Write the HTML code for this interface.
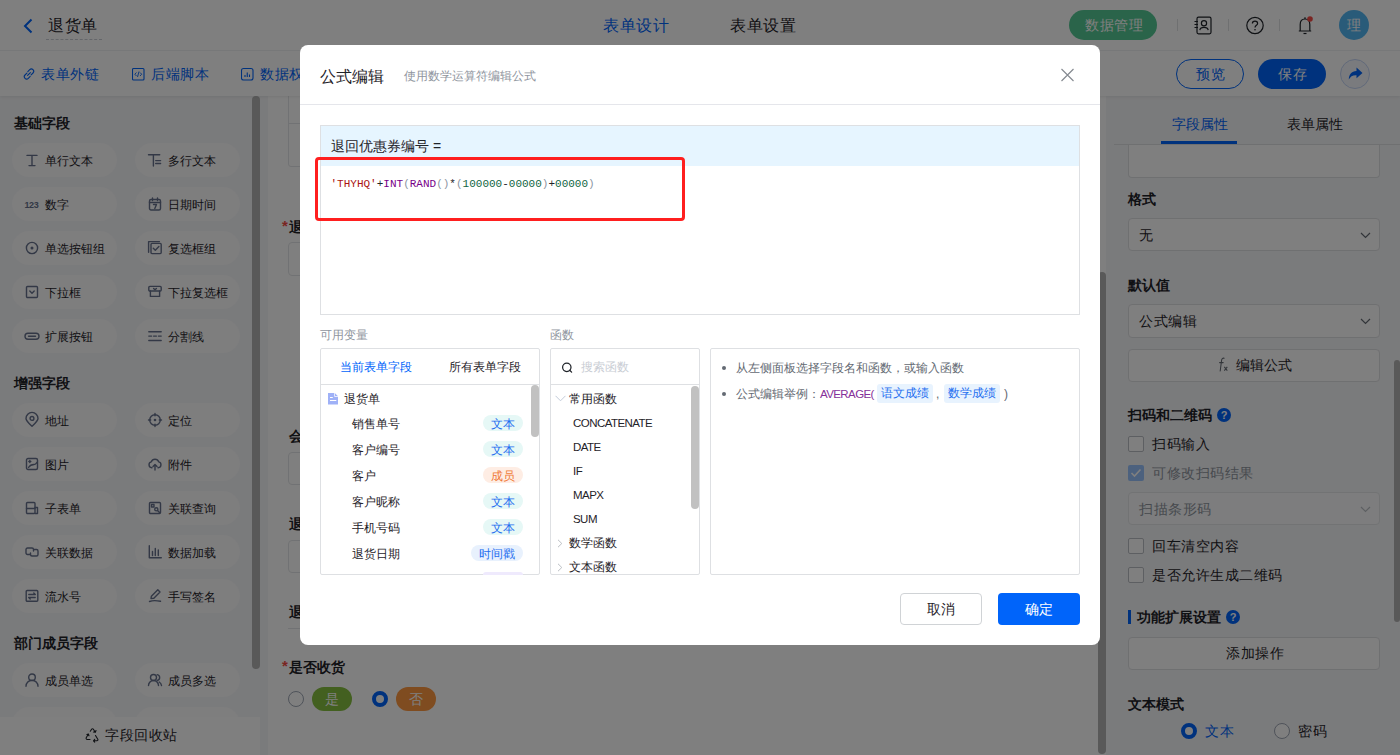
<!DOCTYPE html>
<html><head><meta charset="utf-8">
<style>
*{box-sizing:border-box;}
html,body{margin:0;padding:0;}
body{width:1400px;height:755px;overflow:hidden;position:relative;font-family:"Liberation Sans",sans-serif;color:#1f2329;background:#fff;}
.a{position:absolute;}
.t{position:absolute;white-space:nowrap;line-height:1;}
/* header */
#hdr{left:0;top:0;width:1400px;height:51px;z-index:3;background:#fff;border-bottom:1px solid #eff0f2;}
#bar2{left:0;top:50px;width:1400px;height:46px;background:#fff;z-index:2;box-shadow:0 1px 3px rgba(0,0,0,.08);}
#ov{z-index:5;}#modal{z-index:6;}
#side{left:0;top:96px;width:268px;height:659px;background:#f5f6f8;}
#canvas{left:268px;top:96px;width:838px;height:659px;background:#fff;overflow:hidden;}
#rp{left:1106px;top:96px;width:294px;height:659px;background:#f5f6f8;overflow:hidden;}
.pill{position:absolute;width:105px;height:34px;border-radius:17px;background:#fcfcfd;font-size:12px;}
.pill .lb{position:absolute;left:33px;top:11px;line-height:14px;white-space:nowrap;}
.pill svg{position:absolute;left:13px;top:10px;}
.sh{position:absolute;left:14px;font-size:14px;font-weight:bold;line-height:16px;}
#ov{left:0;top:0;width:1400px;height:755px;background:rgba(0,0,0,.5);}
#modal{left:300px;top:45px;width:800px;height:600px;background:#fff;border-radius:8px;}
.t[style*="font-size:14px"]:not([style*="bold"]),.t[style*="font-size:16px"]{letter-spacing:0.5px;}
</style></head>
<body>

<div id="hdr" class="a">
 <svg class="a" style="left:22px;top:18px" width="12" height="16" viewBox="0 0 12 16"><path d="M9.5 1.5 L3 8 L9.5 14.5" fill="none" stroke="#0064fa" stroke-width="2"/></svg>
 <div class="t" style="left:48px;top:18px;font-size:16px;color:#1f2329;">退货单</div>
 <div class="a" style="left:46px;top:39px;width:56px;border-top:1px dashed #c9cdd4;"></div>
 <div class="t" style="left:603px;top:18px;font-size:16px;color:#0064fa;">表单设计</div>
 <div class="t" style="left:730px;top:18px;font-size:16px;color:#1f2329;">表单设置</div>
 <div class="a" style="left:1069px;top:10px;width:88px;height:30px;border-radius:15px;background:#54c894;"></div>
 <div class="t" style="left:1085px;top:18px;font-size:14px;color:#fff;">数据管理</div>
 <div class="a" style="left:1177px;top:19px;width:1px;height:12px;background:#dee0e3;"></div>
 <div class="a" style="left:1228px;top:19px;width:1px;height:12px;background:#dee0e3;"></div>
 <div class="a" style="left:1279px;top:19px;width:1px;height:12px;background:#dee0e3;"></div>
 <svg class="a" style="left:1193px;top:16px" width="20" height="20" viewBox="0 0 20 20"><rect x="4" y="1.2" width="14" height="16.6" rx="1.5" fill="none" stroke="#1f2329" stroke-width="1.2"/><circle cx="11" cy="7.3" r="2.6" fill="none" stroke="#1f2329" stroke-width="1.2"/><path d="M6.8 14.2C7.5 10.5 14.5 10.5 15.2 14.2" fill="none" stroke="#1f2329" stroke-width="1.2"/><path d="M1.5 5.5h3.5M1.5 8.5h3.5M1.5 11.5h3.5" stroke="#1f2329" stroke-width="1.1"/></svg>
 <svg class="a" style="left:1245px;top:16px" width="20" height="20" viewBox="0 0 20 20"><circle cx="10" cy="9.5" r="8.2" fill="none" stroke="#1f2329" stroke-width="1.2"/><path d="M7.4 7.4C7.4 4.4 12.6 4.4 12.6 7.4C12.6 9.4 10 9.3 10 11.6" fill="none" stroke="#1f2329" stroke-width="1.2"/><circle cx="10" cy="13.8" r="0.8" fill="#1f2329"/></svg>
 <svg class="a" style="left:1295px;top:15px" width="20" height="22" viewBox="0 0 20 22"><path d="M5.2 15.8V9.5C5.2 6.2 7.2 4 10 4C12.8 4 14.8 6.2 14.8 9.5V15.8M3.8 16H16.2" fill="none" stroke="#1f2329" stroke-width="1.2" stroke-linejoin="round"/><path d="M8.5 18.5H11.5" stroke="#1f2329" stroke-width="1.2"/><path d="M10 2.2V4" stroke="#1f2329" stroke-width="1.2"/><circle cx="15" cy="4" r="2.8" fill="#f54a45"/></svg>
 <div class="a" style="left:1339px;top:10px;width:30px;height:30px;border-radius:50%;background:#52b6f2;"></div>
 <div class="t" style="left:1347px;top:18px;font-size:14px;color:#fff;">理</div>
</div>
<div id="bar2" class="a">
 <svg class="a" style="left:22px;top:17px" width="14" height="14" viewBox="0 0 14 14"><path d="M5.6 8.4L8.4 5.6M4.9 6.1L3 8A2.3 2.3 0 0 0 6.3 11.3L8.2 9.4M9.1 7.9L11 6A2.3 2.3 0 0 0 7.7 2.7L5.8 4.6" fill="none" stroke="#0064fa" stroke-width="1.1" stroke-linecap="round"/></svg>
 <div class="t" style="left:41px;top:17px;font-size:14px;color:#0064fa;">表单外链</div>
 <svg class="a" style="left:132px;top:17px" width="13" height="14" viewBox="0 0 13 14"><rect x="0.5" y="1.5" width="11.5" height="11.5" rx="1" fill="none" stroke="#0064fa" stroke-width="1.1"/><path d="M4.5 5.5L2.8 7.2L4.5 9M8 5.5L9.7 7.2L8 9M7 4.5L5.5 10" fill="none" stroke="#0064fa" stroke-width="0.9"/></svg>
 <div class="t" style="left:151px;top:17px;font-size:14px;color:#0064fa;">后端脚本</div>
 <svg class="a" style="left:241px;top:17px" width="13" height="14" viewBox="0 0 13 14"><rect x="0.5" y="1.5" width="11.5" height="11.5" rx="2" fill="none" stroke="#0064fa" stroke-width="1.1"/><path d="M4 10V8M6.25 10V5.5M8.5 10V7.5" stroke="#0064fa" stroke-width="1.1"/></svg>
 <div class="t" style="left:260px;top:17px;font-size:14px;color:#0064fa;">数据权限</div>
 <div class="a" style="left:1176px;top:9px;width:68px;height:30px;border-radius:15px;border:1px solid #0064fa;"></div>
 <div class="t" style="left:1196px;top:17px;font-size:14px;color:#0064fa;">预览</div>
 <div class="a" style="left:1258px;top:9px;width:68px;height:30px;border-radius:15px;background:#0064fa;"></div>
 <div class="t" style="left:1278px;top:17px;font-size:14px;color:#fff;">保存</div>
 <div class="a" style="left:1340px;top:9px;width:30px;height:30px;border-radius:50%;border:1px solid #c4d4f4;background:#f4f7fd;"></div>
 <svg class="a" style="left:1346px;top:16px" width="18" height="16" viewBox="0 0 18 16"><path d="M10.5 1.5 L16.5 7 L10.5 12.3 V9.2 C6.5 9 4.5 10.5 2.8 13.5 C2.8 8.5 5.5 5.3 10.5 4.9 Z" fill="#0064fa"/></svg>
</div>
<div id="side" class="a">
 <div class="sh" style="top:19px">基础字段</div>
 <div class="pill" style="left:12px;top:47px"><svg width="14" height="14" viewBox="0 0 14 14" style="overflow:visible"><path d="M2 2.4h10M7 2.4v10.2M4 12.6h6" stroke="#66718c" fill="none" stroke-width="1.4" stroke-linecap="round" stroke-linejoin="round" stroke-linecap="butt"/></svg><span class="lb">单行文本</span></div>
 <div class="pill" style="left:135px;top:47px"><svg width="14" height="14" viewBox="0 0 14 14" style="overflow:visible"><path d="M0.5 1.8h11.2M5.4 1.8v11.2M7.7 7.6h4.9M7.7 10.5h4.9" stroke="#66718c" fill="none" stroke-width="1.4" stroke-linecap="round" stroke-linejoin="round" stroke-linecap="butt"/></svg><span class="lb">多行文本</span></div>
 <div class="pill" style="left:12px;top:91px"><svg width="14" height="14" viewBox="0 0 14 14" style="overflow:visible"><text x="-0.5" y="10.8" font-size="9" font-weight="bold" fill="#66718c" font-family="Liberation Sans" letter-spacing="-0.4">123</text></svg><span class="lb">数字</span></div>
 <div class="pill" style="left:135px;top:91px"><svg width="14" height="14" viewBox="0 0 14 14" style="overflow:visible"><rect x="1.5" y="2.5" width="11" height="10.5" rx="1.5" stroke="#66718c" fill="none" stroke-width="1.4" stroke-linecap="round" stroke-linejoin="round"/><path d="M1.5 5.5h11M4.5 1v2.5M9.5 1v2.5" stroke="#66718c" fill="none" stroke-width="1.4" stroke-linecap="round" stroke-linejoin="round"/><path d="M5.5 7.5h3L6.8 11.5" stroke="#66718c" fill="none" stroke-width="1.4" stroke-linecap="round" stroke-linejoin="round" stroke-width="1.1"/></svg><span class="lb">日期时间</span></div>
 <div class="pill" style="left:12px;top:135px"><svg width="14" height="14" viewBox="0 0 14 14" style="overflow:visible"><circle cx="7" cy="7" r="5.6" stroke="#66718c" fill="none" stroke-width="1.4" stroke-linecap="round" stroke-linejoin="round"/><circle cx="7" cy="7" r="1.5" fill="#66718c"/></svg><span class="lb">单选按钮组</span></div>
 <div class="pill" style="left:135px;top:135px"><svg width="14" height="14" viewBox="0 0 14 14" style="overflow:visible"><path d="M0.6 11.3V0.6H11.4" stroke="#66718c" fill="none" stroke-width="1.4" stroke-linecap="round" stroke-linejoin="round"/><rect x="3" y="2.4" width="10.2" height="10.2" rx="1" stroke="#66718c" fill="none" stroke-width="1.4" stroke-linecap="round" stroke-linejoin="round"/><path d="M5.3 7.3l2 2 3.6-3.8" stroke="#66718c" fill="none" stroke-width="1.4" stroke-linecap="round" stroke-linejoin="round"/></svg><span class="lb">复选框组</span></div>
 <div class="pill" style="left:12px;top:179px"><svg width="14" height="14" viewBox="0 0 14 14" style="overflow:visible"><rect x="1.5" y="1.5" width="11" height="11" rx="1" stroke="#66718c" fill="none" stroke-width="1.4" stroke-linecap="round" stroke-linejoin="round"/><path d="M4.8 6l2.2 2.2 2.2-2.2" stroke="#66718c" fill="none" stroke-width="1.4" stroke-linecap="round" stroke-linejoin="round"/></svg><span class="lb">下拉框</span></div>
 <div class="pill" style="left:135px;top:179px"><svg width="14" height="14" viewBox="0 0 14 14" style="overflow:visible"><rect x="0.8" y="1.4" width="12.4" height="4.6" rx="1" stroke="#66718c" fill="none" stroke-width="1.4" stroke-linecap="round" stroke-linejoin="round"/><path d="M2.4 6v5.4h9.2V6" stroke="#66718c" fill="none" stroke-width="1.4" stroke-linecap="round" stroke-linejoin="round"/><path d="M5.6 3.4l1.4 1.4 1.4-1.4" stroke="#66718c" fill="none" stroke-width="1.4" stroke-linecap="round" stroke-linejoin="round" stroke-width="1.1"/></svg><span class="lb">下拉复选框</span></div>
 <div class="pill" style="left:12px;top:223px"><svg width="14" height="14" viewBox="0 0 14 14" style="overflow:visible"><rect x="0" y="4.2" width="14" height="6" rx="3" stroke="#66718c" fill="none" stroke-width="1.4" stroke-linecap="round" stroke-linejoin="round"/><path d="M3.5 7.2h7" stroke="#66718c" fill="none" stroke-width="1.4" stroke-linecap="round" stroke-linejoin="round"/></svg><span class="lb">扩展按钮</span></div>
 <div class="pill" style="left:135px;top:223px"><svg width="14" height="14" viewBox="0 0 14 14" style="overflow:visible"><path d="M0.8 2.7h12.4M0.8 7.1h2.8M5.6 7.1h2.8M10.4 7.1h2.8M0.8 11.5h12.4" stroke="#66718c" fill="none" stroke-width="1.4" stroke-linecap="round" stroke-linejoin="round" stroke-linecap="butt"/></svg><span class="lb">分割线</span></div>
 <div class="sh" style="top:279px">增强字段</div>
 <div class="pill" style="left:12px;top:307px"><svg width="14" height="14" viewBox="0 0 14 14" style="overflow:visible"><path d="M7 13.3C3.4 9.8 1 7.6 1 5.4A6 6 0 0 1 13 5.4C13 7.6 10.6 9.8 7 13.3Z" stroke="#66718c" fill="none" stroke-width="1.4" stroke-linecap="round" stroke-linejoin="round"/><circle cx="7" cy="5.4" r="1.9" stroke="#66718c" fill="none" stroke-width="1.4" stroke-linecap="round" stroke-linejoin="round"/></svg><span class="lb">地址</span></div>
 <div class="pill" style="left:135px;top:307px"><svg width="14" height="14" viewBox="0 0 14 14" style="overflow:visible"><circle cx="7" cy="7" r="5.3" stroke="#66718c" fill="none" stroke-width="1.4" stroke-linecap="round" stroke-linejoin="round"/><circle cx="7" cy="7" r="1.3" fill="#66718c"/><path d="M7 0.5v2.2M7 11.3v2.2M0.5 7h2.2M11.3 7h2.2" stroke="#66718c" fill="none" stroke-width="1.4" stroke-linecap="round" stroke-linejoin="round"/></svg><span class="lb">定位</span></div>
 <div class="pill" style="left:12px;top:351px"><svg width="14" height="14" viewBox="0 0 14 14" style="overflow:visible"><rect x="1.5" y="1.5" width="11" height="11" rx="1.5" stroke="#66718c" fill="none" stroke-width="1.4" stroke-linecap="round" stroke-linejoin="round"/><path d="M3.5 10.5C5 8 7 7.5 9 7.5S11 6 12 5.5M3.8 4.5h2M4.8 3.5v2" stroke="#66718c" fill="none" stroke-width="1.4" stroke-linecap="round" stroke-linejoin="round" stroke-width="1.1"/></svg><span class="lb">图片</span></div>
 <div class="pill" style="left:135px;top:351px"><svg width="14" height="14" viewBox="0 0 14 14" style="overflow:visible"><path d="M4 10.8H3.8A3 3 0 0 1 3.3 4.9A3.9 3.9 0 0 1 10.7 4.9A3 3 0 0 1 10.2 10.8H10" stroke="#66718c" fill="none" stroke-width="1.4" stroke-linecap="round" stroke-linejoin="round"/><path d="M7 13V7.8M5 9.6l2-2 2 2" stroke="#66718c" fill="none" stroke-width="1.4" stroke-linecap="round" stroke-linejoin="round"/></svg><span class="lb">附件</span></div>
 <div class="pill" style="left:12px;top:395px"><svg width="14" height="14" viewBox="0 0 14 14" style="overflow:visible"><rect x="1.5" y="1.5" width="8.5" height="11" rx="1" stroke="#66718c" fill="none" stroke-width="1.4" stroke-linecap="round" stroke-linejoin="round"/><path d="M1.5 7.5h8.5M10 6.5h2.5v6h-2.5" stroke="#66718c" fill="none" stroke-width="1.4" stroke-linecap="round" stroke-linejoin="round"/></svg><span class="lb">子表单</span></div>
 <div class="pill" style="left:135px;top:395px"><svg width="14" height="14" viewBox="0 0 14 14" style="overflow:visible"><rect x="1.5" y="1.5" width="11" height="11" rx="1" stroke="#66718c" fill="none" stroke-width="1.4" stroke-linecap="round" stroke-linejoin="round"/><rect x="3.5" y="3.5" width="2.5" height="2.5" stroke="#66718c" fill="none" stroke-width="1.4" stroke-linecap="round" stroke-linejoin="round" stroke-width="1.1"/><circle cx="8.3" cy="8.3" r="1.6" stroke="#66718c" fill="none" stroke-width="1.4" stroke-linecap="round" stroke-linejoin="round" stroke-width="1.1"/><path d="M9.5 9.5l2 2" stroke="#66718c" fill="none" stroke-width="1.4" stroke-linecap="round" stroke-linejoin="round" stroke-width="1.1"/></svg><span class="lb">关联查询</span></div>
 <div class="pill" style="left:12px;top:439px"><svg width="14" height="14" viewBox="0 0 14 14" style="overflow:visible"><path d="M5.5 9.5H2.5A1.5 1.5 0 0 1 1 8V4.5A1.5 1.5 0 0 1 2.5 3H7A1.5 1.5 0 0 1 8.5 4.5V6M8.5 4.5H11.5A1.5 1.5 0 0 1 13 6V9.5A1.5 1.5 0 0 1 11.5 11H7A1.5 1.5 0 0 1 5.5 9.5V8" stroke="#66718c" fill="none" stroke-width="1.4" stroke-linecap="round" stroke-linejoin="round"/></svg><span class="lb">关联数据</span></div>
 <div class="pill" style="left:135px;top:439px"><svg width="14" height="14" viewBox="0 0 14 14" style="overflow:visible"><path d="M1.3 0.8v12h12" stroke="#66718c" fill="none" stroke-width="1.4" stroke-linecap="round" stroke-linejoin="round"/><path d="M4.5 10.5V6.5M7.3 10.5V3.5M10.3 10.5V5" stroke="#66718c" fill="none" stroke-width="1.4" stroke-linecap="round" stroke-linejoin="round"/></svg><span class="lb">数据加载</span></div>
 <div class="pill" style="left:12px;top:483px"><svg width="14" height="14" viewBox="0 0 14 14" style="overflow:visible"><rect x="1.2" y="1.5" width="11.6" height="10.8" rx="1" stroke="#66718c" fill="none" stroke-width="1.4" stroke-linecap="round" stroke-linejoin="round"/><path d="M3.8 5.5h6.5l-1.5-1.4M10.2 8.5h-6.5l1.5 1.4" stroke="#66718c" fill="none" stroke-width="1.4" stroke-linecap="round" stroke-linejoin="round" stroke-width="1.2"/></svg><span class="lb">流水号</span></div>
 <div class="pill" style="left:135px;top:483px"><svg width="14" height="14" viewBox="0 0 14 14" style="overflow:visible"><path d="M1.5 12.5C4 11.5 8 11.3 12.5 12.3" stroke="#66718c" fill="none" stroke-width="1.4" stroke-linecap="round" stroke-linejoin="round"/><path d="M3 9.5L3.4 7.2L9.8 0.8L12 3L5.6 9.4Z" stroke="#66718c" fill="none" stroke-width="1.4" stroke-linecap="round" stroke-linejoin="round"/></svg><span class="lb">手写签名</span></div>
 <div class="sh" style="top:539px">部门成员字段</div>
 <div class="pill" style="left:12px;top:567px"><svg width="14" height="14" viewBox="0 0 14 14" style="overflow:visible"><circle cx="7" cy="4.3" r="3.3" stroke="#66718c" fill="none" stroke-width="1.4" stroke-linecap="round" stroke-linejoin="round"/><path d="M1 13.3A6 6 0 0 1 13 13.3" stroke="#66718c" fill="none" stroke-width="1.4" stroke-linecap="round" stroke-linejoin="round"/></svg><span class="lb">成员单选</span></div>
 <div class="pill" style="left:135px;top:567px"><svg width="14" height="14" viewBox="0 0 14 14" style="overflow:visible"><circle cx="5.5" cy="4.5" r="3" stroke="#66718c" fill="none" stroke-width="1.4" stroke-linecap="round" stroke-linejoin="round"/><path d="M0.5 12.5A5 5 0 0 1 10.5 12.5M9.2 1.6A3 3 0 0 1 9.2 7.5M11.2 9A5 5 0 0 1 13.5 12.5" stroke="#66718c" fill="none" stroke-width="1.4" stroke-linecap="round" stroke-linejoin="round"/></svg><span class="lb">成员多选</span></div>
 <div class="pill" style="left:12px;top:611px"><svg width="14" height="14" viewBox="0 0 14 14" style="overflow:visible"><circle cx="7" cy="4.3" r="3.3" stroke="#66718c" fill="none" stroke-width="1.4" stroke-linecap="round" stroke-linejoin="round"/><path d="M1 13.3A6 6 0 0 1 13 13.3" stroke="#66718c" fill="none" stroke-width="1.4" stroke-linecap="round" stroke-linejoin="round"/></svg><span class="lb">部门单选</span></div>
 <div class="pill" style="left:135px;top:611px"><svg width="14" height="14" viewBox="0 0 14 14" style="overflow:visible"><circle cx="5.5" cy="4.5" r="3" stroke="#66718c" fill="none" stroke-width="1.4" stroke-linecap="round" stroke-linejoin="round"/><path d="M0.5 12.5A5 5 0 0 1 10.5 12.5M9.2 1.6A3 3 0 0 1 9.2 7.5M11.2 9A5 5 0 0 1 13.5 12.5" stroke="#66718c" fill="none" stroke-width="1.4" stroke-linecap="round" stroke-linejoin="round"/></svg><span class="lb">部门多选</span></div>
 <div class="a" style="left:252px;top:0;width:8px;height:573px;border-radius:4px;background:#b3b3b3;"></div>
 <div class="a" style="left:0;top:621px;width:260px;height:38px;background:#fff;"></div>
 <svg class="a" style="left:85px;top:632px" width="15" height="15" viewBox="0 0 15 15"><path d="M5.3 3.2L6.6 1.2C7 0.6 8 0.6 8.4 1.2L10.3 4.3M11 2.5L10.3 4.3L8.4 4M3.4 6L1.2 9.8C0.9 10.4 1.3 11.5 2.2 11.5H5M1.9 6.5L3.4 6L4 7.8M10.5 7.5L12.8 11.3C13.2 12 12.7 12.8 12 12.8H8.5M9.7 11.3L8.5 12.8L9.7 14.2" fill="none" stroke="#1f2329" stroke-width="1.1" stroke-linecap="round" stroke-linejoin="round"/></svg>
 <div class="t" style="left:105px;top:632px;font-size:14px;color:#1f2329;">字段回收站</div>
</div>
<div id="canvas" class="a">
 <div class="a" style="left:20px;top:-30px;width:790px;height:101px;border:1px solid #e3e5e8;border-radius:3px;"></div>
 <div class="a" style="left:20px;top:27px;width:790px;height:1px;background:#e3e5e8;"></div>
 <div class="t" style="left:14px;top:124px;font-size:15px;line-height:16px;font-weight:bold;color:#f54a45;margin-top:-2px;">*</div>
 <div class="t" style="left:20.5px;top:123px;font-size:14px;line-height:16px;font-weight:bold;">退货单号</div>
 <div class="a" style="left:20px;top:146px;width:790px;height:34px;border:1px solid #e3e5e8;border-radius:4px;"></div>
 <div class="t" style="left:20.5px;top:332px;font-size:14px;line-height:16px;font-weight:bold;">会员编号</div>
 <div class="a" style="left:20px;top:356px;width:790px;height:33px;border:1px solid #e3e5e8;border-radius:4px;"></div>
 <div class="t" style="left:20.5px;top:420px;font-size:14px;line-height:16px;font-weight:bold;">退货原因</div>
 <div class="a" style="left:20px;top:444px;width:790px;height:33px;border:1px solid #e3e5e8;border-radius:4px;"></div>
 <div class="t" style="left:20.5px;top:508px;font-size:14px;line-height:16px;font-weight:bold;">退回优惠券编号</div>
 <div class="a" style="left:20px;top:532px;width:790px;height:1px;background:#e3e5e8;"></div>
 <div class="t" style="left:14px;top:564px;font-size:15px;line-height:16px;font-weight:bold;color:#f54a45;margin-top:-2px;">*</div>
 <div class="t" style="left:20.5px;top:563px;font-size:14px;line-height:16px;font-weight:bold;">是否收货</div>
 <div class="a" style="left:20px;top:595px;width:16px;height:16px;border-radius:50%;border:1.2px solid #9ea6b4;background:#fff;"></div>
 <div class="a" style="left:44px;top:591px;width:40px;height:24px;border-radius:12px;background:#86c040;color:#fff;font-size:14px;line-height:24px;text-align:center;">是</div>
 <div class="a" style="left:104px;top:595px;width:16px;height:16px;border-radius:50%;border:4px solid #0064fa;background:#fff;"></div>
 <div class="a" style="left:128px;top:591px;width:40px;height:24px;border-radius:12px;background:#fe9840;color:#fff;font-size:14px;line-height:24px;text-align:center;">否</div>
 <div class="a" style="left:830px;top:176px;width:8px;height:482px;border-radius:4px;background:#b3b3b3;"></div>
</div>
<div id="rp" class="a">
 <div class="t" style="left:66px;top:21px;font-size:14px;letter-spacing:0;color:#0064fa;">字段属性</div>
 <div class="t" style="left:181px;top:21px;font-size:14px;letter-spacing:0;color:#1f2329;">表单属性</div>
 <div class="a" style="left:8px;top:48px;width:286px;height:1px;background:#dee0e3;"></div>
 <div class="a" style="left:55px;top:45px;width:76px;height:3px;background:#0064fa;"></div>
 <div class="a" style="left:22px;top:49px;width:252px;height:33px;border:1px solid #dee0e3;border-top:none;border-radius:0 0 4px 4px;background:#fff;"></div>
 <div class="t" style="left:22px;top:96px;font-size:14px;font-weight:bold;">格式</div>
 <div class="a" style="left:22px;top:122px;width:252px;height:33px;border:1px solid #dee0e3;border-radius:4px;background:#fff;"></div>
 <div class="t" style="left:33px;top:132px;font-size:14px;">无</div>
 <svg class="a" style="left:254px;top:136px" width="11" height="7" viewBox="0 0 11 7"><path d="M1 1l4.5 4.5L10 1" fill="none" stroke="#646a73" stroke-width="1.2"/></svg>
 <div class="t" style="left:22px;top:182px;font-size:14px;font-weight:bold;">默认值</div>
 <div class="a" style="left:22px;top:208px;width:252px;height:34px;border:1px solid #dee0e3;border-radius:4px;background:#fff;"></div>
 <div class="t" style="left:33px;top:218px;font-size:14px;">公式编辑</div>
 <svg class="a" style="left:254px;top:222px" width="11" height="7" viewBox="0 0 11 7"><path d="M1 1l4.5 4.5L10 1" fill="none" stroke="#646a73" stroke-width="1.2"/></svg>
 <div class="a" style="left:22px;top:253px;width:252px;height:33px;border:1px solid #dee0e3;border-radius:4px;background:#fff;"></div>
 <svg class="a" style="left:111px;top:261px" width="14" height="15" viewBox="0 0 14 15"><path d="M7.2 1.2C5.6 0.8 4.8 1.8 4.6 3.2L3.2 14M2.6 5.6H6.2" fill="none" stroke="#646a73" stroke-width="1.05" stroke-linecap="round"/><path d="M7.3 9.8L10.3 13.6M10.3 9.8L7.3 13.6" fill="none" stroke="#646a73" stroke-width="1.05"/></svg>
 <div class="t" style="left:130px;top:262px;font-size:14px;letter-spacing:0;">编辑公式</div>
 <div class="t" style="left:22px;top:312px;font-size:14px;font-weight:bold;">扫码和二维码</div>
 <div class="a" style="left:111px;top:312px;width:14px;height:14px;border-radius:50%;background:#0064fa;color:#fff;font-size:11px;font-weight:bold;text-align:center;line-height:14px;">?</div>
 <div class="a" style="left:22px;top:340px;width:16px;height:16px;border:1px solid #bbbfc4;border-radius:2px;background:#fff;"></div>
 <div class="t" style="left:46px;top:341px;font-size:14px;">扫码输入</div>
 <div class="a" style="left:22px;top:369px;width:16px;height:16px;border-radius:2px;background:#99c2fd;"></div>
 <svg class="a" style="left:24px;top:372px" width="12" height="10" viewBox="0 0 12 10"><path d="M1.5 5l3 3 6-6.5" fill="none" stroke="#fff" stroke-width="1.6"/></svg>
 <div class="t" style="left:46px;top:370px;font-size:14px;color:#8f959e;">可修改扫码结果</div>
 <div class="a" style="left:22px;top:396px;width:252px;height:33px;border:1px solid #e5e6e9;border-radius:4px;background:#fafbfc;"></div>
 <div class="t" style="left:33px;top:406px;font-size:14px;color:#8f959e;">扫描条形码</div>
 <svg class="a" style="left:254px;top:410px" width="11" height="7" viewBox="0 0 11 7"><path d="M1 1l4.5 4.5L10 1" fill="none" stroke="#bbbfc4" stroke-width="1.2"/></svg>
 <div class="a" style="left:22px;top:442px;width:16px;height:16px;border:1px solid #bbbfc4;border-radius:2px;background:#fff;"></div>
 <div class="t" style="left:46px;top:443px;font-size:14px;">回车清空内容</div>
 <div class="a" style="left:22px;top:471px;width:16px;height:16px;border:1px solid #bbbfc4;border-radius:2px;background:#fff;"></div>
 <div class="t" style="left:46px;top:472px;font-size:14px;">是否允许生成二维码</div>
 <div class="a" style="left:22px;top:514px;width:3px;height:14px;background:#0064fa;"></div>
 <div class="t" style="left:31px;top:514px;font-size:14px;font-weight:bold;">功能扩展设置</div>
 <div class="a" style="left:120px;top:514px;width:14px;height:14px;border-radius:50%;background:#0064fa;color:#fff;font-size:11px;font-weight:bold;text-align:center;line-height:14px;">?</div>
 <div class="a" style="left:22px;top:541px;width:252px;height:33px;border:1px solid #dee0e3;border-radius:4px;background:#fff;"></div>
 <div class="t" style="left:120px;top:550px;font-size:14px;">添加操作</div>
 <div class="t" style="left:22px;top:601px;font-size:14px;font-weight:bold;">文本模式</div>
 <div class="a" style="left:75px;top:627px;width:16px;height:16px;border-radius:50%;border:4px solid #0064fa;background:#fff;"></div>
 <div class="t" style="left:99px;top:628px;font-size:14px;color:#0064fa;">文本</div>
 <div class="a" style="left:168px;top:627px;width:16px;height:16px;border-radius:50%;border:1.2px solid #9ea6b4;background:#fff;"></div>
 <div class="t" style="left:192px;top:628px;font-size:14px;">密码</div>
 <div class="a" style="left:288px;top:264px;width:6px;height:262px;border-radius:3px;background:#b3b3b3;"></div>
</div>

<div id="ov" class="a"></div>
<div id="modal" class="a">
 <div class="t" style="left:20px;top:23px;font-size:16px;line-height:18px;color:#1f2329;letter-spacing:0;">公式编辑</div>
 <div class="t" style="left:104px;top:24px;font-size:12px;line-height:14px;color:#8f959e;">使用数学运算符编辑公式</div>
 <svg class="a" style="left:760px;top:23px" width="14" height="14" viewBox="0 0 14 14"><path d="M1.5 1L13.5 13M13.5 1L1.5 13" stroke="#858a91" stroke-width="1.15"/></svg>
 <div class="a" style="left:0;top:59px;width:800px;height:1px;background:#e5e6eb;"></div>
 <div class="a" style="left:20px;top:80px;width:760px;height:190px;border:1px solid #dee0e3;"></div>
 <div class="a" style="left:21px;top:81px;width:758px;height:40px;background:#e6f5ff;"></div>
 <div class="t" style="left:31px;top:93px;font-size:14px;line-height:16px;color:#1f2329;letter-spacing:0;">退回优惠券编号 =</div>
 <div class="t" style="left:30.5px;top:132px;font-family:'Liberation Mono',monospace;font-size:11px;line-height:14px;color:#1f2329;"><span style="color:#aa1111">'THYHQ'</span>+<span style="color:#770088">INT</span><span style="color:#8c96a3">(</span><span style="color:#770088">RAND</span><span style="color:#8c96a3">()</span>*<span style="color:#8c96a3">(</span><span style="color:#116644">100000</span>-<span style="color:#116644">00000</span><span style="color:#8c96a3">)</span>+<span style="color:#116644">00000</span><span style="color:#8c96a3">)</span></div>
 <div class="a" style="left:15px;top:112px;width:370px;height:64px;border:3px solid #ff1f1f;border-radius:4px;"></div>

 <div class="t" style="left:20px;top:282.5px;font-size:12px;line-height:14px;color:#8f959e;">可用变量</div>
 <div class="t" style="left:250px;top:282.5px;font-size:12px;line-height:14px;color:#8f959e;">函数</div>

 <div class="a" style="left:20px;top:303px;width:220px;height:227px;border:1px solid #dee0e3;border-radius:2px;"></div>
 <div class="t" style="left:40px;top:315px;font-size:12px;line-height:14px;color:#0064fa;">当前表单字段</div>
 <div class="t" style="left:148.5px;top:315px;font-size:12px;line-height:14px;color:#1f2329;">所有表单字段</div>
 <div class="a" style="left:21px;top:339px;width:218px;height:1px;background:#dee0e3;"></div>
 <svg class="a" style="left:28px;top:347.5px" width="10" height="12" viewBox="0 0 10 12"><path d="M0 0H6.3V3.7H10V11.5H0Z" fill="#9fb1f7"/><path d="M7 0.2L9.8 3H7Z" fill="#9fb1f7"/><path d="M2 4.5H4.8M2 7.5H8.3" stroke="#fff" stroke-width="1"/></svg>
 <div class="t" style="left:43.5px;top:346.5px;font-size:12px;line-height:14px;color:#1f2329;">退货单</div>
 <div class="t" style="left:52px;top:372px;font-size:12px;line-height:14px;">销售单号</div>
 <div class="a" style="left:183px;top:370px;width:40px;height:16px;border-radius:8px;background:#e6f8f6;color:#1f6ff0;font-size:12px;line-height:18px;text-align:center;">文本</div>
 <div class="t" style="left:52px;top:398px;font-size:12px;line-height:14px;">客户编号</div>
 <div class="a" style="left:183px;top:396px;width:40px;height:16px;border-radius:8px;background:#e6f8f6;color:#1f6ff0;font-size:12px;line-height:18px;text-align:center;">文本</div>
 <div class="t" style="left:52px;top:424px;font-size:12px;line-height:14px;">客户</div>
 <div class="a" style="left:183px;top:422px;width:40px;height:16px;border-radius:8px;background:#feede4;color:#f07a36;font-size:12px;line-height:18px;text-align:center;">成员</div>
 <div class="t" style="left:52px;top:450px;font-size:12px;line-height:14px;">客户昵称</div>
 <div class="a" style="left:183px;top:448px;width:40px;height:16px;border-radius:8px;background:#e6f8f6;color:#1f6ff0;font-size:12px;line-height:18px;text-align:center;">文本</div>
 <div class="t" style="left:52px;top:476px;font-size:12px;line-height:14px;">手机号码</div>
 <div class="a" style="left:183px;top:474px;width:40px;height:16px;border-radius:8px;background:#e6f8f6;color:#1f6ff0;font-size:12px;line-height:18px;text-align:center;">文本</div>
 <div class="t" style="left:52px;top:502px;font-size:12px;line-height:14px;">退货日期</div>
 <div class="a" style="left:171px;top:500px;width:52px;height:16px;border-radius:8px;background:#e8f1fd;color:#1f6ff0;font-size:12px;line-height:18px;text-align:center;">时间戳</div>
 <div class="a" style="left:183px;top:527px;width:40px;height:3px;border-radius:8px 8px 0 0;background:#efeafd;"></div>

 <div class="a" style="left:231px;top:340px;width:8px;height:52px;border-radius:4px;background:#c1c1c1;"></div>

 <div class="a" style="left:250px;top:303px;width:150px;height:227px;border:1px solid #dee0e3;border-radius:2px;"></div>
 <svg class="a" style="left:261px;top:316px" width="13" height="13" viewBox="0 0 13 13"><circle cx="5.8" cy="6.3" r="4.2" fill="none" stroke="#1f2329" stroke-width="1.25"/><path d="M8.7 9.3L10.6 11.1" stroke="#1f2329" stroke-width="1.3" stroke-linecap="round"/></svg>
 <div class="t" style="left:281px;top:315px;font-size:12px;line-height:14px;color:#c9cdd4;">搜索函数</div>
 <div class="a" style="left:251px;top:339px;width:148px;height:1px;background:#dee0e3;"></div>
 <svg class="a" style="left:255px;top:350px" width="11" height="7" viewBox="0 0 11 7"><path d="M0.5 0.8L5.5 5.8L10.5 0.8" fill="none" stroke="#c3cbd9" stroke-width="1"/></svg>
 <div class="t" style="left:269px;top:346.5px;font-size:12px;line-height:14px;color:#1f2329;">常用函数</div>
 <div class="t" style="left:273px;top:370.5px;font-size:11.5px;line-height:14px;letter-spacing:-0.55px;color:#1f2329;">CONCATENATE</div>
 <div class="t" style="left:273px;top:394.5px;font-size:11.5px;line-height:14px;letter-spacing:-0.55px;color:#1f2329;">DATE</div>
 <div class="t" style="left:273px;top:418.5px;font-size:11.5px;line-height:14px;letter-spacing:-0.55px;color:#1f2329;">IF</div>
 <div class="t" style="left:273px;top:442.5px;font-size:11.5px;line-height:14px;letter-spacing:-0.55px;color:#1f2329;">MAPX</div>
 <div class="t" style="left:273px;top:466.5px;font-size:11.5px;line-height:14px;letter-spacing:-0.55px;color:#1f2329;">SUM</div>

 <svg class="a" style="left:257px;top:494px" width="6" height="9" viewBox="0 0 6 9"><path d="M1 0.8L4.8 4.5L1 8.2" fill="none" stroke="#bbbfc4" stroke-width="1"/></svg>
 <div class="t" style="left:269px;top:491px;font-size:12px;line-height:14px;color:#1f2329;">数学函数</div>
 <svg class="a" style="left:257px;top:518px" width="6" height="9" viewBox="0 0 6 9"><path d="M1 0.8L4.8 4.5L1 8.2" fill="none" stroke="#bbbfc4" stroke-width="1"/></svg>
 <div class="t" style="left:269px;top:515px;font-size:12px;line-height:14px;color:#1f2329;">文本函数</div>
 <div class="a" style="left:391px;top:341px;width:8px;height:123px;border-radius:4px;background:#c1c1c1;"></div>

 <div class="a" style="left:410px;top:303px;width:370px;height:227px;border:1px solid #dee0e3;border-radius:2px;"></div>
 <div class="a" style="left:421.5px;top:321px;width:4px;height:4px;border-radius:50%;background:#646a73;"></div>
 <div class="t" style="left:436px;top:315.5px;font-size:12px;line-height:14px;color:#646a73;">从左侧面板选择字段名和函数，或输入函数</div>
 <div class="a" style="left:421.5px;top:347px;width:4px;height:4px;border-radius:50%;background:#646a73;"></div>
 <div class="t" style="left:436px;top:341.5px;font-size:12px;line-height:14px;color:#646a73;">公式编辑举例：<span style="color:#86309a;font-size:11.5px;letter-spacing:-0.6px;">AVERAGE(</span></div>
 <div class="a" style="left:577px;top:338.5px;width:56px;height:19px;border-radius:3px;background:#e8f3fe;color:#1f6ff0;font-size:12px;line-height:19px;text-align:center;">语文成绩</div>
 <div class="t" style="left:636px;top:341.5px;font-size:12px;line-height:14px;color:#646a73;">,</div>
 <div class="a" style="left:644px;top:338.5px;width:56px;height:19px;border-radius:3px;background:#e8f3fe;color:#1f6ff0;font-size:12px;line-height:19px;text-align:center;">数学成绩</div>
 <div class="t" style="left:704px;top:341.5px;font-size:12px;line-height:14px;color:#646a73;">)</div>

 <div class="a" style="left:600px;top:548px;width:82px;height:32px;border:1px solid #d0d3d6;border-radius:4px;font-size:14px;line-height:30px;text-align:center;color:#1f2329;">取消</div>
 <div class="a" style="left:698px;top:548px;width:82px;height:32px;background:#0064fa;border-radius:4px;font-size:14px;line-height:32px;text-align:center;color:#fff;">确定</div>
</div>
</body></html>
